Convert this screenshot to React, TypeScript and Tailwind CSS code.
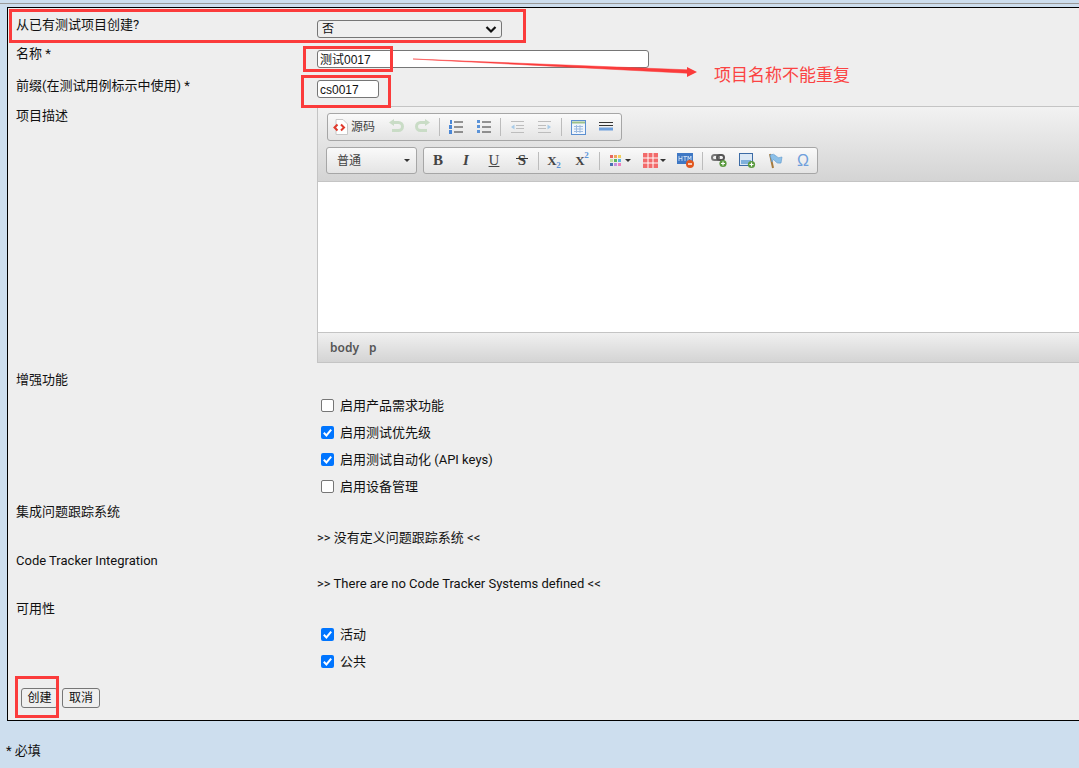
// App.tsx
import React from 'react'

function Row({ className, label, labelClass = '', children }: { className: string; label?: string; labelClass?: string; children?: React.ReactNode }) {
  return (
    <div className={`flex ${className}`}>
      <div className={`w-[301px] shrink-0 h-[18px] leading-[20px] ${labelClass}`}>{label}</div>
      <div className="flex-1 min-w-0">{children}</div>
    </div>
  )
}

function Check({ on, label }: { on?: boolean; label: string }) {
  return (
    <div className="h-[27px] flex items-center pl-[4px]">
      <span className={`-mt-[1px] w-[13px] h-[13px] rounded-[2px] flex items-center justify-center ${on ? 'bg-[#0075ff]' : 'bg-white border border-[#767676]'}`}>
        {on && (
          <svg width="11" height="11" viewBox="0 0 11 11">
            <path d="M1.8 5.8 L4.4 8.4 L9.2 2.6" fill="none" stroke="#fff" strokeWidth="2" />
          </svg>
        )}
      </span>
      <span className="ml-[6px]">{label}</span>
    </div>
  )
}

function Sep() {
  return <span className="w-px h-[18px] bg-[#bcbcbc] mx-[2px] shrink-0" />
}

function Btn({ w = 'w-[28px]', children }: { w?: string; children: React.ReactNode }) {
  return <span className={`h-full flex items-center justify-center shrink-0 ${w}`}>{children}</span>
}

function Caret() {
  return <span className="w-0 h-0 border-x-[3px] border-x-transparent border-t-[3px] border-t-[#333] inline-block" />
}

function Plus({ x, y }: { x: number; y: number }) {
  return (
    <g>
      <circle cx={x} cy={y} r="3.6" fill="#5a9a3e" />
      <path d={`M${x - 2} ${y}H${x + 2}M${x} ${y - 2}V${y + 2}`} stroke="#fff" strokeWidth="1.2" />
    </g>
  )
}

const serifIcon = "text-[#444] [font-family:'Liberation_Serif',serif]"

function Editor() {
  return (
    <div className="w-[900px] h-[257px] border border-[#c4c4c4] flex flex-col bg-white">
      <div className="h-[75px] bg-linear-to-b from-[#f2f2f2] to-[#d4d4d4] border-b border-[#c4c4c4] pt-[6px] pl-[9px] shrink-0">
        {/* first toolbar row */}
        <div className="w-[295px] h-[28px] border border-[#a6a6a6] rounded-[3px] bg-linear-to-b from-[#fafafa] to-[#e4e4e4] flex items-center pl-[5px]">
          <svg width="16" height="16" viewBox="0 0 16 16" className="shrink-0">
            <path d="M3 .5H10L14.5 5V15.5H3Z" fill="#fff" stroke="#c8c8c8" />
            <path d="M4.5 5.5 L1.5 8.5 L4.5 11.5M8 5.5 L11 8.5 L8 11.5" fill="none" stroke="#e0392b" strokeWidth="2" />
          </svg>
          <span className="ml-[2px] w-[32px] text-[12px] text-[#444] whitespace-nowrap">源码</span>
          <Btn w="w-[26px]">
            <svg width="16" height="16" viewBox="0 0 16 16"><path d="M5 3.5H10.5A3.5 3.5 0 0 1 10.5 11.5H4" fill="none" stroke="#c9dcc6" strokeWidth="3" /><path d="M6 0V7L1 3.5Z" fill="#c9dcc6" /></svg>
          </Btn>
          <Btn>
            <svg width="16" height="16" viewBox="0 0 16 16"><path d="M11 3.5H5.5A3.5 3.5 0 0 0 5.5 11.5H12" fill="none" stroke="#c9dcc6" strokeWidth="3" /><path d="M10 0V7L15 3.5Z" fill="#c9dcc6" /></svg>
          </Btn>
          <Sep />
          <Btn>
            <svg width="14" height="16" viewBox="0 0 14 16"><path d="M5 3H14M5 8H14M5 13H14" stroke="#333" /><g fill="#4a87d6"><rect x="1" y="1" width="2" height="4" /><rect x="0" y="6" width="3" height="4" /><rect x="0" y="11" width="3" height="4" /></g></svg>
          </Btn>
          <Btn>
            <svg width="14" height="14" viewBox="0 0 14 14"><path d="M5 2H14M5 7H14M5 12H14" stroke="#333" /><g fill="#5b93d8"><rect x="0" y="0" width="3" height="3" /><rect x="0" y="5" width="3" height="3" /><rect x="0" y="10" width="3" height="3" /></g></svg>
          </Btn>
          <Sep />
          <Btn>
            <svg width="14" height="14" viewBox="0 0 14 14"><path d="M1 1.5H14M6 5.5H14M6 8.5H14M1 12.5H14" stroke="#bdbdbd" /><path d="M4.5 4.5V9.5L1 7Z" fill="#a8cbe8" /></svg>
          </Btn>
          <Btn>
            <svg width="14" height="14" viewBox="0 0 14 14"><path d="M0 1.5H13M0 5.5H8M0 8.5H8M0 12.5H13" stroke="#bdbdbd" /><path d="M9.5 4.5V9.5L13 7Z" fill="#a8cbe8" /></svg>
          </Btn>
          <Sep />
          <Btn>
            <svg width="15" height="15" viewBox="0 0 15 15"><rect x=".5" y=".5" width="14" height="14" fill="#f0f5fb" stroke="#5b8fd0" /><path d="M1 2.5H14" stroke="#9cc08a" strokeWidth="2" /><path d="M3 6.5H12M3 9H12M3 11.5H12M5.5 5V13M9 5V13" stroke="#9dbbe0" /></svg>
          </Btn>
          <Btn>
            <svg width="14" height="12" viewBox="0 0 14 12"><path d="M0 1.5H14M0 4.5H14" stroke="#333" /><path d="M0 8H14" stroke="#6d9fdc" strokeWidth="3" /></svg>
          </Btn>
        </div>
        {/* second toolbar row */}
        <div className="flex mt-[6px] -ml-[1px] h-[27px]">
          <div className="w-[91px] border border-[#a6a6a6] rounded-[3px] bg-linear-to-b from-[#fafafa] to-[#e4e4e4] flex items-center pl-[10px] pr-[6px] justify-between text-[12px] text-[#444]">
            <span>普通</span>
            <Caret />
          </div>
          <div className="ml-[6px] w-[395px] border border-[#a6a6a6] rounded-[3px] bg-linear-to-b from-[#fafafa] to-[#e4e4e4] flex items-center">
            <Btn><span className={`font-bold text-[15px] ${serifIcon}`}>B</span></Btn>
            <Btn><span className={`font-bold italic text-[15px] ${serifIcon}`}>I</span></Btn>
            <Btn><span className={`underline text-[15px] ${serifIcon}`}>U</span></Btn>
            <Btn>
              <span className={`relative font-bold text-[15px] ${serifIcon}`}>
                S<span className="absolute -left-[2px] -right-[2px] top-[9px] h-px bg-[#333]" />
              </span>
            </Btn>
            <Sep />
            <Btn>
              <span className={`relative font-bold text-[13px] leading-none pr-[6px] ${serifIcon}`}>X<span className="absolute left-[9px] top-[7px] text-[9px] text-[#5b93d8]">2</span></span>
            </Btn>
            <Btn>
              <span className={`relative font-bold text-[13px] leading-none pr-[6px] ${serifIcon}`}>X<span className="absolute left-[9px] -top-[3px] text-[9px] text-[#5b93d8]">2</span></span>
            </Btn>
            <Sep />
            <Btn w="w-[36px]">
              <span className="flex items-center gap-[3px]">
                <svg width="12" height="12" viewBox="0 0 12 12">
                  <rect width="3" height="3" fill="#e5665c" /><rect x="4" width="3" height="3" fill="#f0a45c" /><rect x="8" width="3" height="3" fill="#f2cf5c" />
                  <rect y="4" width="3" height="3" fill="#bfe0a0" /><rect x="4" y="4" width="3" height="3" fill="#5cb85c" /><rect x="8" y="4" width="3" height="3" fill="#5cb0e0" />
                  <rect y="8" width="3" height="3" fill="#4a70b0" /><rect x="4" y="8" width="3" height="3" fill="#c090e0" /><rect x="8" y="8" width="3" height="3" fill="#f080c0" />
                </svg>
                <Caret />
              </span>
            </Btn>
            <Btn w="w-[32px]">
              <span className="flex items-center gap-[2px]">
                <svg width="15" height="15" viewBox="0 0 15 15"><rect width="15" height="15" fill="#f26b6b" /><path d="M5 0V15M10 0V15M0 5H15M0 10H15" stroke="#fff" /></svg>
                <Caret />
              </span>
            </Btn>
            <Btn w="w-[30px]">
              <svg width="17" height="15" viewBox="0 0 17 15"><rect width="16" height="11" fill="#3f78c4" /><path d="M2 3V8M5 3V8M2 5.5H5M6.5 3.5H10M8 3.5V8M11 8V3L12.5 6L14 3V8" stroke="#dbe8f7" strokeWidth=".8" fill="none" /><circle cx="13" cy="11" r="4" fill="#e2571e" /><path d="M11 11H15" stroke="#fff" strokeWidth="1.4" /></svg>
            </Btn>
            <Sep />
            <Btn>
              <svg width="17" height="15" viewBox="0 0 17 15"><rect x="1" y="2" width="7" height="5" rx="2.5" fill="none" stroke="#777" strokeWidth="2" /><rect x="6" y="2" width="7" height="5" rx="2.5" fill="none" stroke="#555" strokeWidth="2" /><Plus x={12} y={10.5} /></svg>
            </Btn>
            <Btn>
              <svg width="17" height="16" viewBox="0 0 17 16"><rect x=".5" y=".5" width="13" height="12" fill="#dbe8f5" stroke="#3c6ba5" /><rect x="2" y="7" width="10" height="4" fill="#7fb0dc" /><Plus x={12.5} y={11.5} /></svg>
            </Btn>
            <Btn>
              <svg width="16" height="16" viewBox="0 0 16 16"><path d="M3 1L6 15" stroke="#a67a3d" strokeWidth="2" /><path d="M3 2Q7 0 9 3T15 4L14 10Q10 11 8 8T5 9Z" fill="#8cc0e8" stroke="#5d97cc" strokeWidth=".6" /></svg>
            </Btn>
            <Btn>
              <span className="text-[16px] text-[#6f9fdc] leading-none [font-family:'Liberation_Sans',sans-serif]">Ω</span>
            </Btn>
          </div>
        </div>
      </div>
      <div className="flex-1" />
      <div className="h-[30px] shrink-0 border-t border-[#c4c4c4] bg-linear-to-b from-[#f0f0f0] to-[#d4d4d4] flex items-center pl-[12px] gap-[10px] text-[12px] font-semibold text-[#555] [font-family:'Noto_Sans',sans-serif]">
        <span>body</span>
        <span>p</span>
      </div>
    </div>
  )
}

const fieldFont = "text-[12px] [font-family:'Liberation_Sans','Noto_Sans_CJK_SC',sans-serif]"

export default function App() {
  return (
    <div className="relative h-[768px] w-[1079px] overflow-hidden bg-[#cddeee] text-[13px] text-[#111] [font-family:'Roboto','Noto_Sans_CJK_SC',sans-serif]">
      <div className="h-[3px]" />
      <div className="h-px bg-[#999]" />
      <div className="h-[3px]" />
      <div className="ml-[7px] w-[1200px] h-[714px] border border-black bg-[#eeeeee] pl-[8px] pt-[7px]">
        <Row className="h-[34px]" label="从已有测试项目创建?">
          <div className={`mt-[5px] w-[185px] h-[18px] border border-[#767676] rounded-[3px] bg-[#efefef] flex items-center justify-between px-[4px] ${fieldFont}`}>
            <span className="-mt-[1px]">否</span>
            <svg width="12" height="12" viewBox="0 0 12 12"><path d="M1.5 4 L6 8.5 L10.5 4" fill="none" stroke="#111" strokeWidth="2.2" /></svg>
          </div>
        </Row>
        <Row className="h-[30px]" label="名称 *" labelClass="-mt-[5px]">
          <div className={`mt-[1px] w-[332px] h-[18px] border border-[#767676] rounded-[3px] bg-white flex items-center pl-[2px] pt-[1px] ${fieldFont}`}>测试0017</div>
        </Row>
        <Row className="h-[27px]" label="前缀(在测试用例标示中使用) *" labelClass="-mt-[3px]">
          <div className={`mt-[1px] w-[62px] h-[18px] border border-[#767676] rounded-[3px] bg-white flex items-center pl-[2px] pt-[1px] ${fieldFont}`}>cs0017</div>
        </Row>
        <Row className="h-[264px]" label="项目描述">
          <Editor />
        </Row>
        <Row className="h-[132px]" label="增强功能">
          <div className="pt-[22px]">
            <Check label="启用产品需求功能" />
            <Check on label="启用测试优先级" />
            <Check on label="启用测试自动化 (API keys)" />
            <Check label="启用设备管理" />
          </div>
        </Row>
        <Row className="h-[49px]" label="集成问题跟踪系统">
          <div className="pt-[26px] leading-[20px]">&gt;&gt; 没有定义问题跟踪系统 &lt;&lt;</div>
        </Row>
        <Row className="h-[48px]" label="Code Tracker Integration">
          <div className="pt-[23px] leading-[20px]">&gt;&gt; There are no Code Tracker Systems defined &lt;&lt;</div>
        </Row>
        <Row className="h-[77px]" label="可用性">
          <div className="pt-[22px]">
            <Check on label="活动" />
            <Check on label="公共" />
          </div>
        </Row>
        <div className={`flex gap-[4px] pl-[5px] mt-[12px] ${fieldFont}`}>
          <button className="w-[37px] h-[20px] border border-[#767676] rounded-[3px] bg-[#efefef] leading-none">创建</button>
          <button className="w-[38px] h-[20px] border border-[#767676] rounded-[3px] bg-[#efefef] leading-none">取消</button>
        </div>
      </div>
      <div className="pl-[6px] mt-[20px] leading-[20px]">* 必填</div>

      {/* annotations drawn on the screenshot */}
      <div className="absolute left-[9px] top-[9px] w-[517px] h-[34px] border-[3px] border-[#fb3b3b]" />
      <div className="absolute left-[303px] top-[46px] w-[90px] h-[26px] border-[3px] border-[#fb3b3b]" />
      <div className="absolute left-[301px] top-[75px] w-[90px] h-[33px] border-[3px] border-[#fb3b3b]" />
      <div className="absolute left-[15px] top-[676px] w-[44px] h-[42px] border-[3px] border-[#fb3b3b]" />
      <svg className="absolute left-[410px] top-[55px]" width="290" height="24" viewBox="0 0 290 24">
        <path d="M3 4 L277 14.8 L277 18.2 Z" fill="#fb3b3b" stroke="#fb3b3b" strokeWidth=".5" />
        <path d="M277 12 L287 17 L277 22 Z" fill="#fb3b3b" />
      </svg>
      <div className="absolute left-[714px] top-[64px] text-[17px] leading-[22px] text-[#fb4343]">项目名称不能重复</div>
    </div>
  )
}
